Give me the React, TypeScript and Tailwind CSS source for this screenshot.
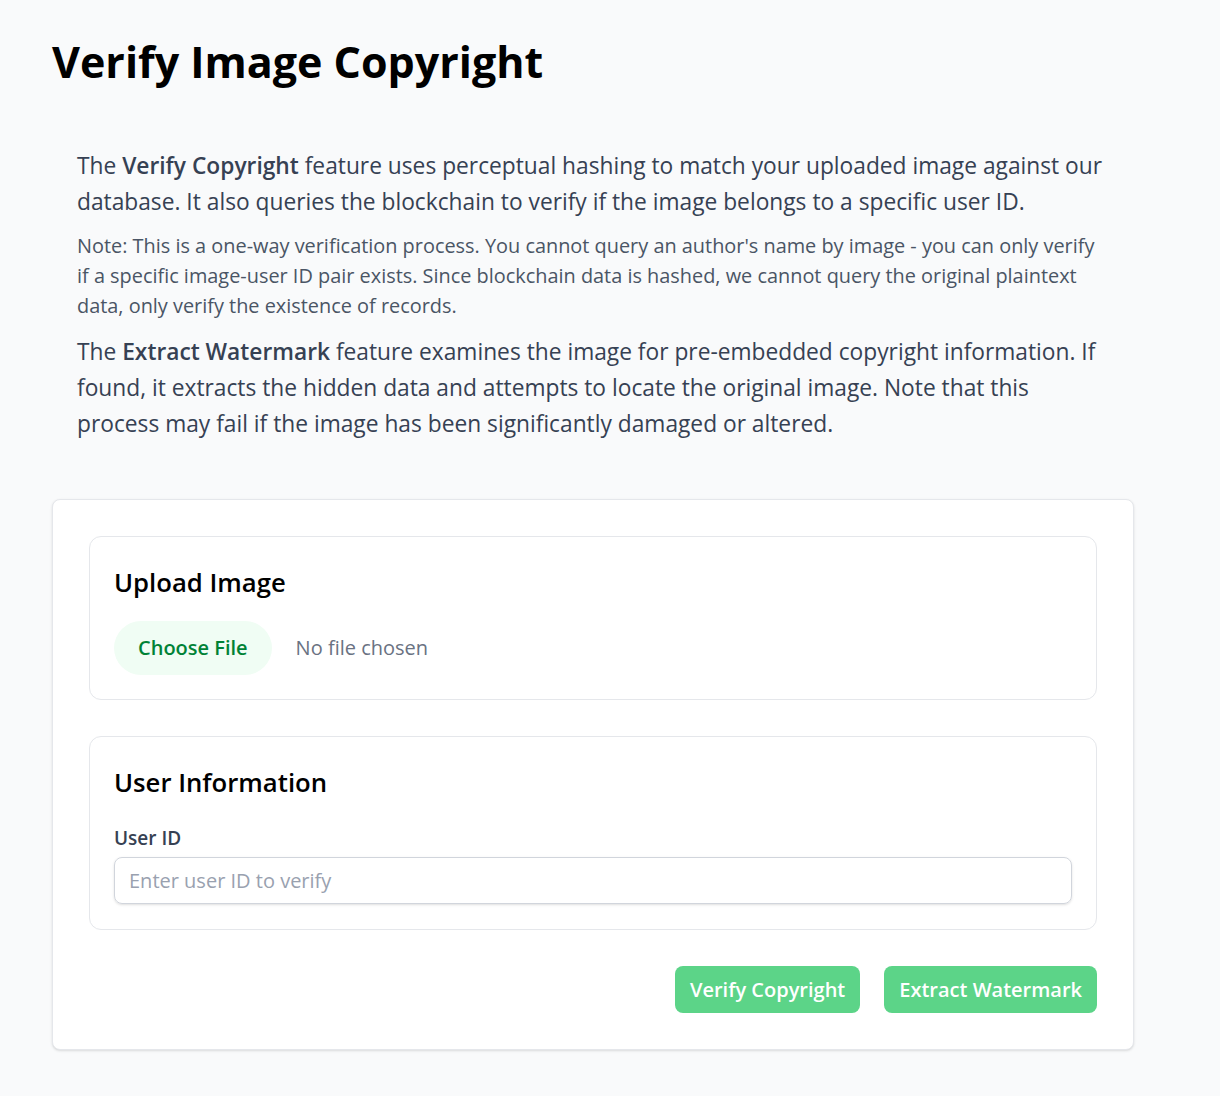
import React from "react";

const SectionBox = ({
	title,
	pad,
	children,
}: {
	title: string;
	pad: string;
	children: React.ReactNode;
}) => (
	<div className={`rounded-xl border border-gray-200 bg-white px-6 pt-[28px] ${pad}`}>
		<h2 className="text-[25.7px] leading-[36px] font-semibold text-black">{title}</h2>
		{children}
	</div>
);

export default function App() {
	return (
		<div
			className="min-h-[1096px] bg-gray-50 pl-[52px] pt-[34px] pb-11"
			style={{ fontFamily: '"Open Sans", "Noto Sans", sans-serif' }}
		>
			<h1 className="text-[43px] leading-[56px] font-bold text-black">
				Verify Image Copyright
			</h1>

			<div className="mt-[58px] w-[1082px] px-[25px] text-gray-700">
				<p className="text-[22.75px] leading-[36px]">
					The <strong className="font-semibold">Verify Copyright</strong> feature
					uses perceptual hashing to match your uploaded image against our
					database. It also queries the blockchain to verify if the image belongs
					to a specific user ID.
				</p>
				<p className="mt-[11px] text-[19.9px] leading-[30px] text-gray-600">
					Note: This is a one-way verification process. You cannot query an
					author's name by image - you can only verify if a specific image-user
					ID pair exists. Since blockchain data is hashed, we cannot query the
					original plaintext data, only verify the existence of records.
				</p>
				<p className="mt-[13px] text-[22.75px] leading-[36px]">
					The <strong className="font-semibold">Extract Watermark</strong>{" "}
					feature examines the image for pre-embedded copyright information. If
					found, it extracts the hidden data and attempts to locate the original
					image. Note that this process may fail if the image has been
					significantly damaged or altered.
				</p>
			</div>

			<div className="mt-[57px] w-[1082px] rounded-lg border border-gray-200 bg-white px-9 pt-9 pb-9 shadow-sm">
				<div className="flex flex-col gap-9">
					<SectionBox title="Upload Image" pad="pb-[24px]">
						<input
							type="file"
							accept="image/*"
							className="mt-[20px] block w-full text-[20px] text-gray-500 file:mr-6 file:h-[54px] file:cursor-pointer file:rounded-full file:border-0 file:bg-green-50 file:px-6 file:text-[20px] file:font-semibold file:text-green-700"
						/>
					</SectionBox>

					<SectionBox title="User Information" pad="pb-[25px]">
						<label className="mt-[24px] block text-[19px] leading-[26px] font-semibold text-gray-700">
							User ID
						</label>
						<input
							type="text"
							placeholder="Enter user ID to verify"
							className="mt-[6px] block h-[47px] w-full rounded-lg border border-gray-300 px-[14px] text-[20px] text-gray-900 shadow-sm outline-none placeholder:text-gray-400"
						/>
					</SectionBox>
				</div>

				<div className="mt-9 flex justify-end gap-6">
					<button className="h-[47px] rounded-lg bg-[#5cd488] px-[15px] text-[20px] font-semibold text-white">
						Verify Copyright
					</button>
					<button className="h-[47px] rounded-lg bg-[#5cd488] px-[15px] text-[20px] font-semibold text-white">
						Extract Watermark
					</button>
				</div>
			</div>
		</div>
	);
}
